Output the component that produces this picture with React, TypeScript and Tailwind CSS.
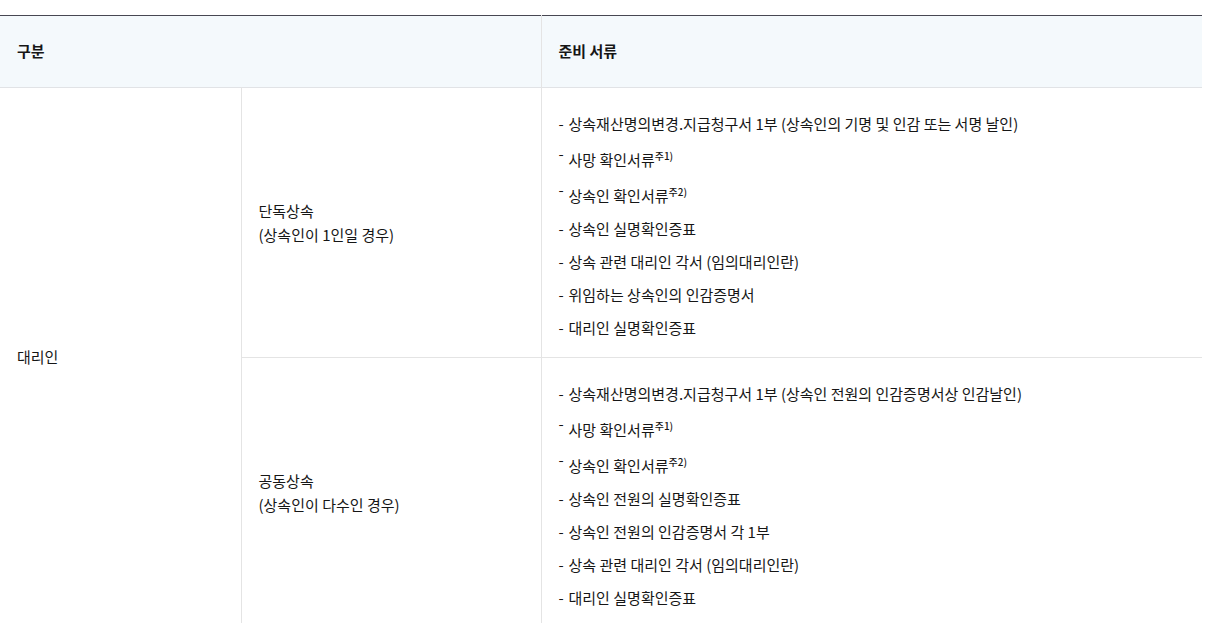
type Item = { text: string; note?: string };

const single: Item[] = [
  { text: "상속재산명의변경.지급청구서 1부 (상속인의 기명 및 인감 또는 서명 날인)" },
  { text: "사망 확인서류", note: "주1)" },
  { text: "상속인 확인서류", note: "주2)" },
  { text: "상속인 실명확인증표" },
  { text: "상속 관련 대리인 각서 (임의대리인란)" },
  { text: "위임하는 상속인의 인감증명서" },
  { text: "대리인 실명확인증표" },
];

const joint: Item[] = [
  { text: "상속재산명의변경.지급청구서 1부 (상속인 전원의 인감증명서상 인감날인)" },
  { text: "사망 확인서류", note: "주1)" },
  { text: "상속인 확인서류", note: "주2)" },
  { text: "상속인 전원의 실명확인증표" },
  { text: "상속인 전원의 인감증명서 각 1부" },
  { text: "상속 관련 대리인 각서 (임의대리인란)" },
  { text: "대리인 실명확인증표" },
];

function DocList({ items }: { items: Item[] }) {
  return (
    <ul>
      {items.map((item, i) => (
        <li
          key={i}
          className={`relative pl-[10px] leading-[23px] ${i < items.length - 1 ? "mb-[10px]" : ""} ${item.note ? "pt-[3px]" : ""}`}
        >
          <span className={`absolute left-0 ${item.note ? "top-[-3px]" : "top-0"}`}>-</span>
          {item.text}
          {item.note && (
            <sup className="text-[10px] font-medium top-[-6px]">{item.note}</sup>
          )}
        </li>
      ))}
    </ul>
  );
}

export default function App() {
  return (
    <div
      className="bg-white pt-[15px] text-[15px] text-[#161616]"
      style={{ fontFamily: '"Noto Sans CJK KR", "Noto Sans", sans-serif' }}
    >
      <table className="w-[1202px] table-fixed border-collapse border-t border-[#474752]">
        <colgroup>
          <col className="w-[241px]" />
          <col className="w-[300px]" />
          <col className="w-[661px]" />
        </colgroup>
        <thead>
          <tr className="h-[72px] bg-[#f4f9fc] border-b border-[#e1e3e6]">
            <th colSpan={2} className="px-[17px] text-left font-semibold">
              구분
            </th>
            <th className="border-l border-[#e4e4e4] px-[17px] text-left font-semibold">
              준비 서류
            </th>
          </tr>
        </thead>
        <tbody>
          <tr className="border-b border-[#e4e4e4]">
            <td rowSpan={2} className="border-r border-[#e4e4e4] px-[17px] align-middle">
              대리인
            </td>
            <td className="border-r border-[#e4e4e4] px-[17px] align-middle leading-[24px]">
              단독상속
              <br />
              (상속인이 1인일 경우)
            </td>
            <td className="px-[17px] pt-[24px] pb-[18px] align-top">
              <DocList items={single} />
            </td>
          </tr>
          <tr>
            <td className="border-r border-[#e4e4e4] px-[17px] align-middle leading-[24px]">
              공동상속
              <br />
              (상속인이 다수인 경우)
            </td>
            <td className="px-[17px] pt-[24px] pb-[18px] align-top">
              <DocList items={joint} />
            </td>
          </tr>
        </tbody>
      </table>
    </div>
  );
}
